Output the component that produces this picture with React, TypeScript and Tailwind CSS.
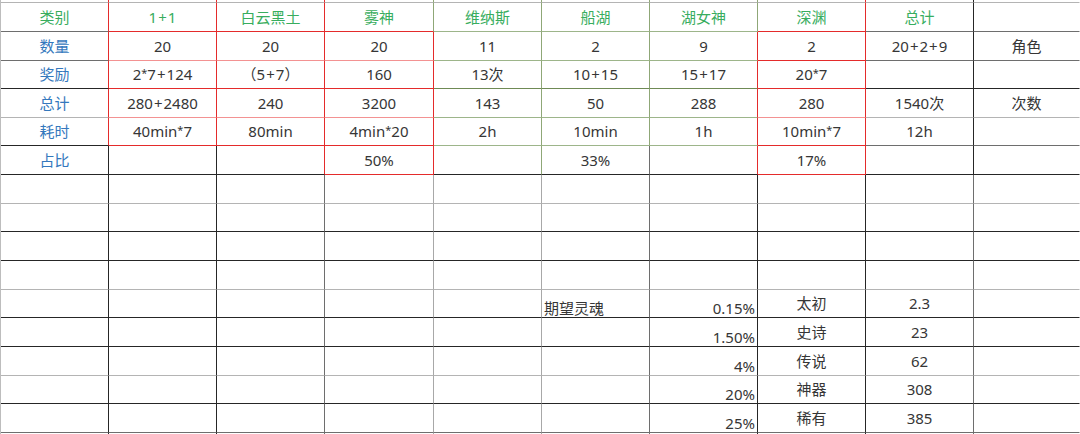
import * as React from "react";

// right-border colour per code
const rightCls: Record<string, string> = {
  r: "border-r-[#e42b2b]",
  o: "border-r-[#8fa777]",
  k: "border-r-[#262626]",
  d: "border-r-[#6e6e6e]",
  g: "border-r-[#a8a8a8]",
  n: "border-r-transparent",
};

// bottom-border colour per code
const bottomCls: Record<string, string> = {
  r: "border-b-[#e42b2b]",
  p: "border-b-[#f39292]",
  o: "border-b-[#9db58a]",
  O: "border-b-[#6f8a55]",
  k: "border-b-[#262626]",
  d: "border-b-[#6e6e6e]",
  g: "border-b-[#b4b4b4]",
  n: "border-b-transparent",
};

const vLines = [
  "rrroooorkn",
  "rrroooorkn",
  "rrrroorrkn",
  "rrrroorrkn",
  "rrrroorrkn",
  "rrrroorrkn",
  "kkrrodrrkn",
  ...Array(10).fill("kkdggdkkdn"),
];

const hLines = [
  "gggggggggg",
  "drrrooordd",
  "dpppooordd",
  "krrrOOOrkk",
  "gpppooopgg",
  "krrrooordd",
  "kkkrkkkrkk",
  "gggggggggg",
  "kkkkkkkkkk",
  "kkkkkkkkkk",
  "gggggggggg",
  "kkkkkkkkkk",
  "kkkkkkkkkk",
  "gggggggggg",
  "kkkkkkkkkk",
  "dddddddddd",
  "nnnnnnnnnn",
];

const header = ["类别", "1+1", "白云黑土", "雾神", "维纳斯", "船湖", "湖女神", "深渊", "总计", ""];

const body: string[][] = [
  ["数量", "20", "20", "20", "11", "2", "9", "2", "20+2+9", "角色"],
  ["奖励", "2*7+124", "（5+7）", "160", "13次", "10+15", "15+17", "20*7", "", ""],
  ["总计", "280+2480", "240", "3200", "143", "50", "288", "280", "1540次", "次数"],
  ["耗时", "40min*7", "80min", "4min*20", "2h", "10min", "1h", "10min*7", "12h", ""],
  ["占比", "", "", "50%", "", "33%", "", "17%", "", ""],
];

const souls = [
  ["0.15%", "太初", "2.3"],
  ["1.50%", "史诗", "23"],
  ["4%", "传说", "62"],
  ["20%", "神器", "308"],
  ["25%", "稀有", "385"],
];

function cellText(r: number, c: number): string {
  if (r === 1) return header[c];
  if (r >= 2 && r <= 6) return body[r - 2][c];
  if (r >= 11 && r <= 15) {
    const s = souls[r - 11];
    if (c === 5 && r === 11) return "期望灵魂";
    if (c === 6) return s[0];
    if (c === 7) return s[1];
    if (c === 8) return s[2];
  }
  return "";
}

function align(r: number, c: number): string {
  if (r >= 11 && c === 5) return "justify-start items-end pl-[2px] pb-[1px]";
  if (r >= 11 && c === 6) return "justify-end items-end pr-[2px] pb-[1px]";
  return "justify-center items-center";
}

function color(r: number, c: number): string {
  if (r === 1 && c < 9) return "text-[#38ad5e]";
  if (c === 0 && r >= 2 && r <= 6) return "text-[#3478bd]";
  return "text-[#363636]";
}

// the sheet font draws a wider plus and a small raised asterisk
function Glyphs({ text }: { text: string }) {
  const parts = text.split(/([+*])/);
  return (
    <span>
      {parts.map((p, i) =>
        p === "+" ? (
          <span key={i} className="px-[1px]">+</span>
        ) : p === "*" ? (
          <span key={i} className="text-[11px] align-[3px]">*</span>
        ) : (
          p
        )
      )}
    </span>
  );
}

export default function App() {
  const rows = vLines.length;
  return (
    <div
      className="w-[1080px] h-[434px] overflow-hidden bg-white"
      style={{ fontFamily: '"Noto Sans", "Noto Sans CJK SC", sans-serif' }}
    >
      <div className="grid grid-cols-[108px_108px_108px_109px_108px_108px_108px_108px_108px_1fr] grid-rows-[3px_29px_29px_28px_29px_28px_29px_29px_28px_29px_29px_28px_29px_29px_28px_29px_2px] border-l border-l-[#bdbdbd] text-[15px] leading-none">
        {Array.from({ length: rows }).map((_, r) =>
          Array.from({ length: 10 }).map((__, c) => (
            <div
              key={`${r}-${c}`}
              className={`flex whitespace-nowrap border-r border-b ${rightCls[vLines[r][c]]} ${bottomCls[hLines[r][c]]} ${align(r, c)} ${color(r, c)}`}
            >
              <Glyphs text={cellText(r, c)} />
            </div>
          ))
        )}
      </div>
    </div>
  );
}
